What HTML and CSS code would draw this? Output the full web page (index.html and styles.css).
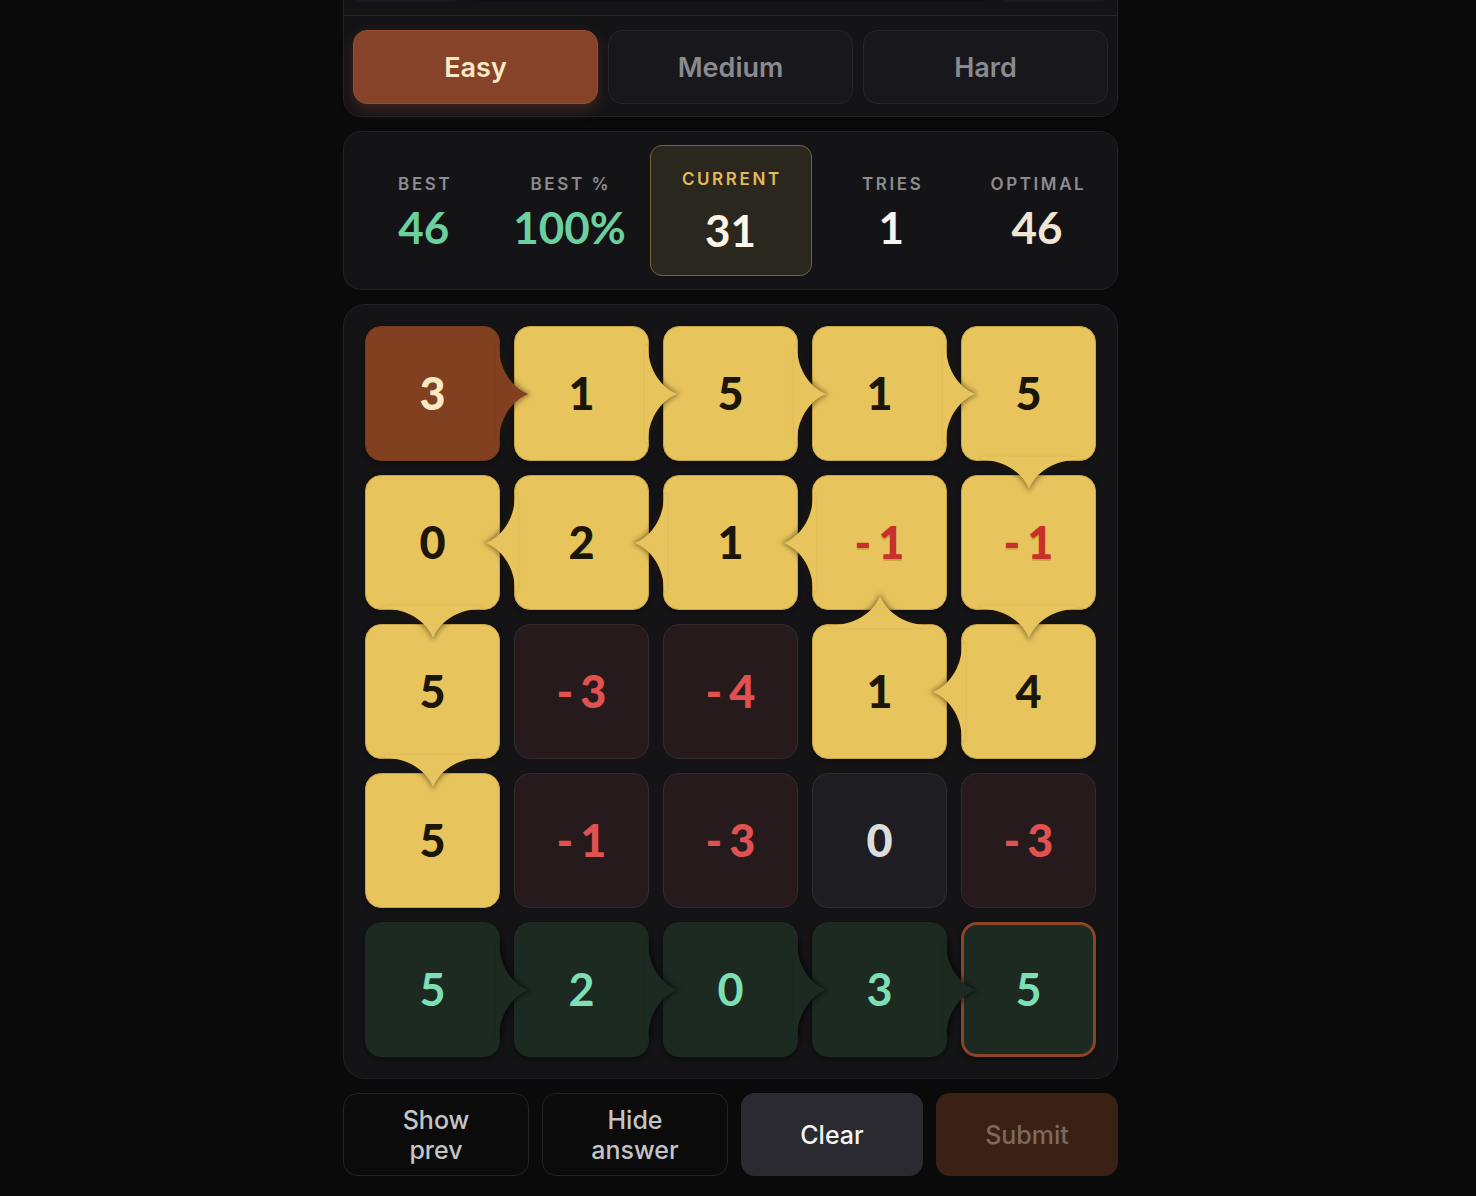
FILE: index.html
```html
<!DOCTYPE html>
<html lang="en">
<head>
<meta charset="utf-8">
<title>Path Sum</title>
<link rel="stylesheet" href="styles.css">
</head>
<body>
<main class="app">
  <section class="panel mode-panel">
    <div class="mode-head">
      <div class="head-chip"></div>
      <div class="head-track"></div>
      <div class="head-chip"></div>
    </div>
    <div class="modes">
      <button class="mode active">Easy</button>
      <button class="mode">Medium</button>
      <button class="mode">Hard</button>
    </div>
  </section>

  <section class="panel stats">
    <div class="stat"><div class="stat-label">Best</div><div class="stat-value green">46</div></div>
    <div class="stat"><div class="stat-label">Best %</div><div class="stat-value green">100%</div></div>
    <div class="stat current"><div class="stat-label">Current</div><div class="stat-value">31</div></div>
    <div class="stat"><div class="stat-label">Tries</div><div class="stat-value white">1</div></div>
    <div class="stat"><div class="stat-label">Optimal</div><div class="stat-value cream">46</div></div>
  </section>

  <section class="panel board">
    <div class="grid">
      <!-- row 0 -->
      <div class="cell start"><span class="num">3</span><i class="bump right"><svg viewBox="0 0 34 96"><path d="M0,0 L3,0 C3,20 13,40 32,48 C13,56 3,76 3,96 L0,96 Z"/></svg></i></div>
      <div class="cell path"><span class="num">1</span><i class="bump right"><svg viewBox="0 0 34 96"><path d="M0,0 L3,0 C3,20 13,40 32,48 C13,56 3,76 3,96 L0,96 Z"/></svg></i></div>
      <div class="cell path"><span class="num">5</span><i class="bump right"><svg viewBox="0 0 34 96"><path d="M0,0 L3,0 C3,20 13,40 32,48 C13,56 3,76 3,96 L0,96 Z"/></svg></i></div>
      <div class="cell path"><span class="num">1</span><i class="bump right"><svg viewBox="0 0 34 96"><path d="M0,0 L3,0 C3,20 13,40 32,48 C13,56 3,76 3,96 L0,96 Z"/></svg></i></div>
      <div class="cell path"><span class="num">5</span><i class="bump down"><svg viewBox="0 0 34 96"><path d="M0,0 L3,0 C3,20 13,40 32,48 C13,56 3,76 3,96 L0,96 Z"/></svg></i></div>
      <!-- row 1 -->
      <div class="cell path"><span class="num">0</span><i class="bump down"><svg viewBox="0 0 34 96"><path d="M0,0 L3,0 C3,20 13,40 32,48 C13,56 3,76 3,96 L0,96 Z"/></svg></i></div>
      <div class="cell path"><span class="num">2</span><i class="bump left"><svg viewBox="0 0 34 96"><path d="M0,0 L3,0 C3,20 13,40 32,48 C13,56 3,76 3,96 L0,96 Z"/></svg></i></div>
      <div class="cell path"><span class="num">1</span><i class="bump left"><svg viewBox="0 0 34 96"><path d="M0,0 L3,0 C3,20 13,40 32,48 C13,56 3,76 3,96 L0,96 Z"/></svg></i></div>
      <div class="cell path"><span class="num neg">-1</span><i class="bump left"><svg viewBox="0 0 34 96"><path d="M0,0 L3,0 C3,20 13,40 32,48 C13,56 3,76 3,96 L0,96 Z"/></svg></i></div>
      <div class="cell path"><span class="num neg">-1</span><i class="bump down"><svg viewBox="0 0 34 96"><path d="M0,0 L3,0 C3,20 13,40 32,48 C13,56 3,76 3,96 L0,96 Z"/></svg></i></div>
      <!-- row 2 -->
      <div class="cell path"><span class="num">5</span><i class="bump down"><svg viewBox="0 0 34 96"><path d="M0,0 L3,0 C3,20 13,40 32,48 C13,56 3,76 3,96 L0,96 Z"/></svg></i></div>
      <div class="cell minus"><span class="num neg">-3</span></div>
      <div class="cell minus"><span class="num neg">-4</span></div>
      <div class="cell path"><span class="num">1</span><i class="bump up"><svg viewBox="0 0 34 96"><path d="M0,0 L3,0 C3,20 13,40 32,48 C13,56 3,76 3,96 L0,96 Z"/></svg></i></div>
      <div class="cell path"><span class="num">4</span><i class="bump left"><svg viewBox="0 0 34 96"><path d="M0,0 L3,0 C3,20 13,40 32,48 C13,56 3,76 3,96 L0,96 Z"/></svg></i></div>
      <!-- row 3 -->
      <div class="cell path"><span class="num">5</span></div>
      <div class="cell minus"><span class="num neg">-1</span></div>
      <div class="cell minus"><span class="num neg">-3</span></div>
      <div class="cell zero"><span class="num">0</span></div>
      <div class="cell minus"><span class="num neg">-3</span></div>
      <!-- row 4 -->
      <div class="cell answer"><span class="num">5</span><i class="bump right"><svg viewBox="0 0 34 96"><path d="M0,0 L3,0 C3,20 13,40 32,48 C13,56 3,76 3,96 L0,96 Z"/></svg></i></div>
      <div class="cell answer"><span class="num">2</span><i class="bump right"><svg viewBox="0 0 34 96"><path d="M0,0 L3,0 C3,20 13,40 32,48 C13,56 3,76 3,96 L0,96 Z"/></svg></i></div>
      <div class="cell answer"><span class="num">0</span><i class="bump right"><svg viewBox="0 0 34 96"><path d="M0,0 L3,0 C3,20 13,40 32,48 C13,56 3,76 3,96 L0,96 Z"/></svg></i></div>
      <div class="cell answer"><span class="num">3</span><i class="bump right"><svg viewBox="0 0 34 96"><path d="M0,0 L3,0 C3,20 13,40 32,48 C13,56 3,76 3,96 L0,96 Z"/></svg></i></div>
      <div class="cell answer selected"><span class="num">5</span></div>
    </div>
  </section>

  <div class="actions">
    <button class="action ghost">Show<br>prev</button>
    <button class="action ghost">Hide<br>answer</button>
    <button class="action clear">Clear</button>
    <button class="action submit">Submit</button>
  </div>
</main>
</body>
</html>
```

FILE: styles.css
```css
* { box-sizing: border-box; }

html, body {
  margin: 0;
  background: #0a0a0b;
}

body {
  padding-right: 15px;
  font-family: "Inter", "Noto Sans", sans-serif;
  overflow: hidden;
}

.app {
  width: 775px;
  margin: -36px auto 0;
  display: flex;
  flex-direction: column;
  gap: 14px;
}

.panel {
  background: #141417;
  border: 1px solid #222226;
  border-radius: 18px;
}

/* mode panel */
.mode-head {
  height: 51px;
  border-bottom: 1px solid #25252a;
  display: flex;
  align-items: flex-end;
  gap: 12px;
  padding: 0 8px 13px;
}
.head-chip {
  width: 110px;
  height: 28px;
  background: #1a1a1e;
  border-radius: 8px;
}
.head-track {
  flex: 1;
  height: 28px;
  background: #0f0f12;
  border-radius: 8px;
}

.modes {
  display: grid;
  grid-template-columns: repeat(3, 1fr);
  gap: 10px;
  padding: 14px 9px 12px;
}

.mode {
  height: 74px;
  border-radius: 14px;
  border: 1px solid #25252a;
  background: #18181c;
  color: #8a8a8f;
  font-family: "Inter", sans-serif;
  font-size: 27px;
  font-weight: 600;
  cursor: pointer;
}
.mode.active {
  background: #86432a;
  border-color: #96502f;
  color: #fbe8c4;
  box-shadow: 0 6px 14px rgba(134, 67, 42, 0.35);
}

/* stats */
.stats {
  display: flex;
  align-items: center;
  gap: 14px;
  padding: 13px 14px;
}
.stat {
  flex: 1;
  display: flex;
  flex-direction: column;
  align-items: center;
  gap: 7px;
  padding-top: 4px;
}
.stat-label {
  font-size: 17px;
  line-height: 22px;
  font-weight: 600;
  letter-spacing: 2.6px;
  text-transform: uppercase;
  color: #8c8c91;
  margin-right: -2.6px;
}
.stat-value {
  font-family: "Lato", sans-serif;
  font-size: 44px;
  font-weight: 700;
  line-height: 50px;
  color: #f6f2e8;
}
.stat-value.green { color: #6bcf9f; }
.stat-value.white { color: #f7f5ef; }
.stat-value.cream { color: #efe7d4; }

.stat.current {
  flex: 0 0 162px;
  height: 131px;
  justify-content: center;
  gap: 15px;
  background: #2a271f;
  border: 1.5px solid #76633a;
  border-radius: 12px;
  padding: 2px 0 0;
}
.stat.current .stat-label { color: #e3b95c; }
.stat.current .stat-value { color: #fdf6e6; }

/* board */
.board {
  padding: 21px;
  border-radius: 22px;
}
.grid {
  display: grid;
  grid-template-columns: repeat(5, 1fr);
  gap: 14px;
}

.cell {
  position: relative;
  aspect-ratio: 1 / 1;
  border-radius: 16px;
  display: flex;
  align-items: center;
  justify-content: center;
  border: 1px solid transparent;
  color: #1b1608;
}

.num {
  font-family: "Lato", sans-serif;
  font-weight: 900;
  font-size: 45px;
  line-height: 1;
}
.num.neg {
  letter-spacing: 7px;
  margin-right: -7px;
}

.cell.path {
  background: #e8c45d;
  border-color: #c9a444;
  color: #e8c45d;
  box-shadow: 0 2px 5px rgba(0, 0, 0, 0.35);
}
.cell.path .num { color: #1c1608; }
.cell.path .num.neg {
  color: #c8302b;
  text-shadow: 0 2px 0 rgba(170, 100, 30, 0.35);
}

.cell.start {
  background: #81401f;
  border-color: #743a1e;
  color: #81401f;
  box-shadow: 0 2px 5px rgba(0, 0, 0, 0.35);
}
.cell.start .num { color: #fde8c4; }

.cell.minus {
  background: #261a1d;
  border-color: #35292c;
}
.cell.minus .num { color: #e05150; }

.cell.zero {
  background: #1e1e22;
  border-color: #2e2e33;
}
.cell.zero .num { color: #dcdcdc; }

.cell.answer {
  background: #1c2a22;
  border-color: #1c2a22;
  color: #1c2a22;
  box-shadow: 0 2px 5px rgba(0, 0, 0, 0.4);
}
.cell.answer .num {
  font-weight: 700;
  color: #7ddfb3;
}
.cell.answer.selected {
  border: 3px solid #8b4426;
}

/* connectors */
.bump {
  position: absolute;
  z-index: 2;
  width: 34px;
  height: 96px;
  display: block;
  pointer-events: none;
}
.bump svg {
  display: block;
  width: 34px;
  height: 96px;
  overflow: visible;
  filter: drop-shadow(3px 0 2.5px rgba(40, 25, 0, 0.45));
}
.bump path { fill: currentColor; }

.bump.right {
  left: calc(100% - 3px);
  top: calc(50% - 48px);
}
.bump.left {
  right: calc(100% - 3px);
  top: calc(50% - 48px);
  transform: rotate(180deg);
}
.bump.down {
  left: calc(50% - 17px);
  top: calc(100% - 34px);
  transform: rotate(90deg);
}
.bump.up {
  left: calc(50% - 17px);
  bottom: calc(100% - 34px);
  transform: rotate(-90deg);
}
.cell.answer .bump svg {
  filter: drop-shadow(3px 0 2.5px rgba(0, 0, 0, 0.5));
}

/* actions */
.actions {
  display: grid;
  grid-template-columns: 186px 186px 1fr 1fr;
  gap: 13px;
}
.action {
  height: 83px;
  border-radius: 14px;
  border: 1px solid transparent;
  font-family: "Inter", sans-serif;
  font-size: 25px;
  font-weight: 500;
  line-height: 30px;
  cursor: pointer;
}
.action.ghost {
  background: #0b0b0c;
  border-color: #232326;
  color: #c4c4c4;
}
.action.clear {
  background: #2a2a30;
  color: #f5f5f5;
}
.action.submit {
  background: #3b2016;
  color: #7c6a5c;
}
```
